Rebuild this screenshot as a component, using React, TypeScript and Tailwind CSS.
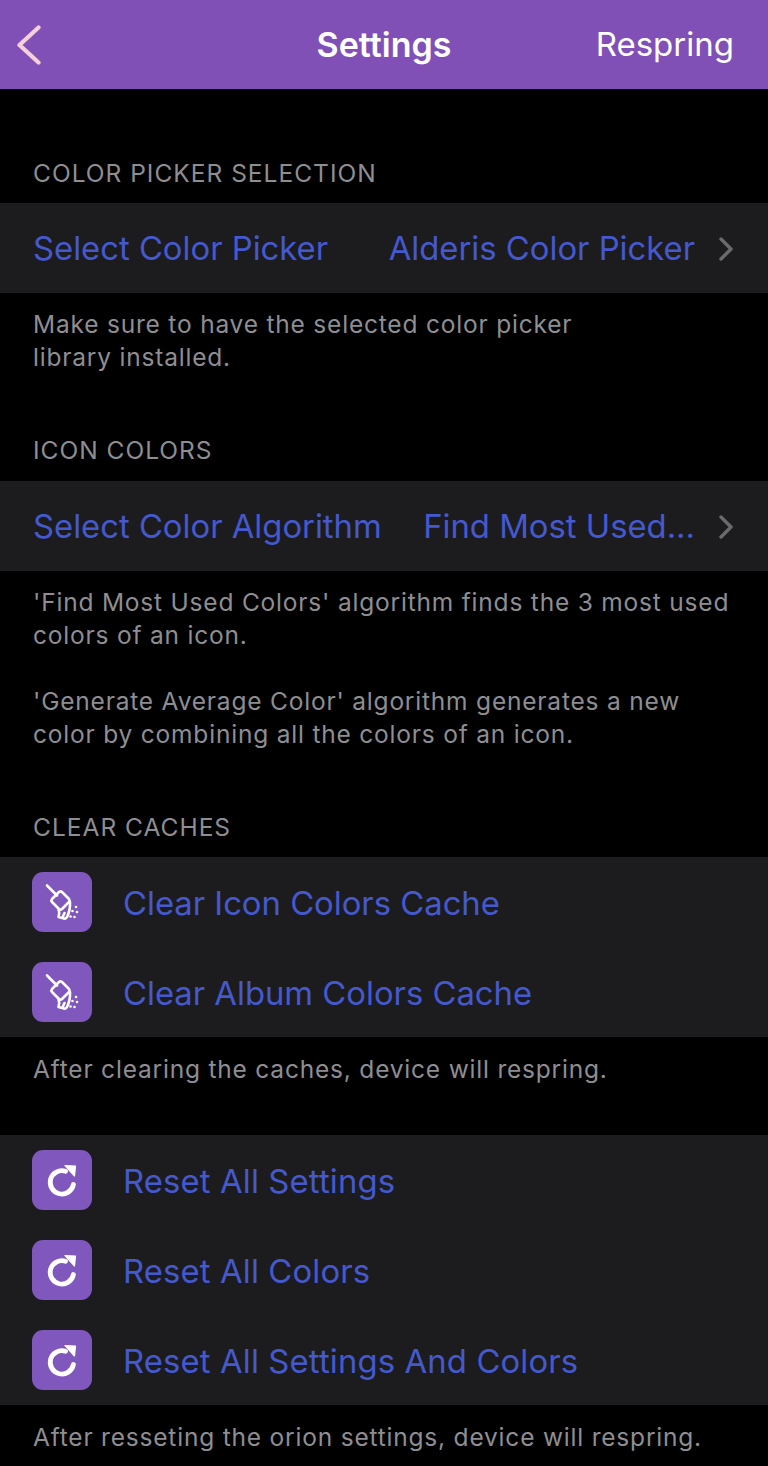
function BroomIcon() {
  return (
    <svg viewBox="0 0 60 60" className="h-[60px] w-[60px]" fill="none" stroke="white" strokeWidth="2.6" strokeLinecap="round" strokeLinejoin="round">
      <path d="M15 13.5 L25 23.5" />
      <path d="M20 27 L27 20 Q28.5 18.8 30 20 L37 27 Q38.2 28.5 37 30 L30 37 Q28.5 38.2 27 37 L20 30 Q18.8 28.5 20 27 Z" />
      <path d="M26.5 37 Q28 41 26.5 45 L32 46.5 Q34 47 35 45 Q38.5 38 38 30" />
      <path d="M30.5 45.5 L32.5 41" />
      <g fill="white" stroke="none">
        <circle cx="44" cy="35" r="1.3" />
        <circle cx="40.5" cy="39" r="1.3" />
        <circle cx="45" cy="40" r="1.3" />
        <circle cx="38.5" cy="44.5" r="1.3" />
        <circle cx="42.5" cy="45" r="1.3" />
      </g>
    </svg>
  );
}

function ResetIcon() {
  return (
    <svg viewBox="0 0 60 60" className="h-[60px] w-[60px]" fill="none">
      <path d="M41.4 34.5 A11.7 11.7 0 1 1 33.5 21.2" stroke="white" strokeWidth="4.8" strokeLinecap="round" />
      <path d="M33 15.5 L43.5 16 L42.5 26 Z" fill="white" stroke="white" strokeWidth="1.2" strokeLinejoin="round" />
    </svg>
  );
}

function SectionHeader({ children }: { children: string }) {
  return <div className="h-[33px] px-[33px] text-[24.5px] leading-[33px] tracking-[1px] text-[#8e8e92]">{children}</div>;
}

function Footer({ children, top = "pt-[15px]" }: { children: React.ReactNode; top?: string }) {
  return <div className={`px-[33px] text-[24.5px] leading-[33px] tracking-[0.8px] text-[#8e8e92] ${top}`}>{children}</div>;
}

function ValueRow({ label, value }: { label: string; value: string }) {
  return (
    <div className="flex h-[90px] items-center justify-between bg-[#1c1c1e] pl-[33px] pr-[35px] pt-[2px] text-[32.8px] text-[#4559cf]">
      <span>{label}</span>
      <span className="flex items-center gap-[24px]">
        {value}
        <svg viewBox="0 0 14 24" className="h-[24px] w-[14px]" fill="none" stroke="#6a6a6e" strokeWidth="3.4" strokeLinecap="round" strokeLinejoin="round">
          <path d="M2 2 L12 12 L2 22" />
        </svg>
      </span>
    </div>
  );
}

function IconRow({ label, icon, wide = false }: { label: string; icon: React.ReactNode; wide?: boolean }) {
  return (
    <div className="flex h-[90px] items-center gap-[31px] pl-[32px] text-[32.8px] text-[#4559cf]">
      <div className="flex h-[60px] w-[60px] items-center justify-center rounded-[11px] bg-[#8057bd]">{icon}</div>
      <span className={wide ? "pt-[3px] tracking-[0.15px]" : "pt-[3px]"}>{label}</span>
    </div>
  );
}

export default function App() {
  return (
    <div className="h-[1466px] w-[768px] overflow-hidden bg-black font-['Inter',sans-serif]">
      <header className="relative flex h-[89px] items-center justify-end bg-[#8150b6] pr-[34px] text-white">
        <svg viewBox="0 0 24 40" className="absolute left-[17px] top-[25px] h-[40px] w-[24px]" fill="none" stroke="#f5d0d8" strokeWidth="4.2" strokeLinecap="round" strokeLinejoin="round">
          <path d="M21.5 2.5 L2.5 20 L21.5 37.5" />
        </svg>
        <h1 className="absolute inset-x-0 text-center text-[34px] font-semibold">Settings</h1>
        <button type="button" className="text-[33px]">Respring</button>
      </header>

      <div className="pt-[68px]">
        <SectionHeader>COLOR PICKER SELECTION</SectionHeader>
        <div className="pt-[13px]">
          <ValueRow label="Select Color Picker" value="Alderis Color Picker" />
        </div>
        <Footer>
          Make sure to have the selected color picker
          <br />
          library installed.
        </Footer>
      </div>

      <div className="pt-[60px]">
        <SectionHeader>ICON COLORS</SectionHeader>
        <div className="pt-[14px]">
          <ValueRow label="Select Color Algorithm" value="Find Most Used..." />
        </div>
        <Footer>
          'Find Most Used Colors' algorithm finds the 3 most used
          <br />
          colors of an icon.
          <br />
          <br />
          'Generate Average Color' algorithm generates a new
          <br />
          color by combining all the colors of an icon.
        </Footer>
      </div>

      <div className="pt-[60px]">
        <SectionHeader>CLEAR CACHES</SectionHeader>
        <div className="mt-[13px] bg-[#1c1c1e]">
          <IconRow label="Clear Icon Colors Cache" icon={<BroomIcon />} />
          <IconRow label="Clear Album Colors Cache" icon={<BroomIcon />} />
        </div>
        <Footer top="pt-[16px]">After clearing the caches, device will respring.</Footer>
      </div>

      <div className="mt-[49px] bg-[#1c1c1e]">
        <IconRow label="Reset All Settings" icon={<ResetIcon />} wide />
        <IconRow label="Reset All Colors" icon={<ResetIcon />} wide />
        <IconRow label="Reset All Settings And Colors" icon={<ResetIcon />} wide />
      </div>
      <Footer top="pt-[16px]">After resseting the orion settings, device will respring.</Footer>
    </div>
  );
}
